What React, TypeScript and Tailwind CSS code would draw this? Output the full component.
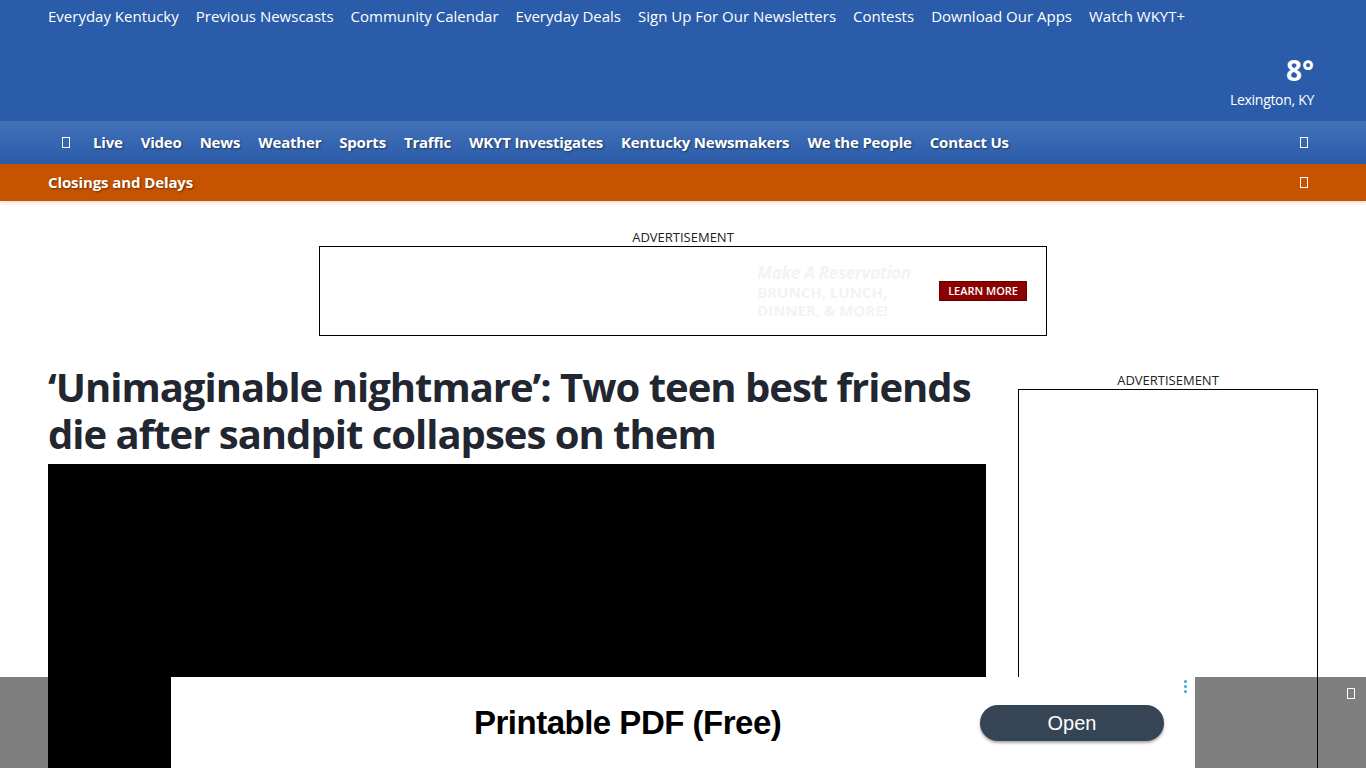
const topLinks = [
  "Everyday Kentucky",
  "Previous Newscasts",
  "Community Calendar",
  "Everyday Deals",
  "Sign Up For Our Newsletters",
  "Contests",
  "Download Our Apps",
  "Watch WKYT+",
];

const navLinks = [
  "Live",
  "Video",
  "News",
  "Weather",
  "Sports",
  "Traffic",
  "WKYT Investigates",
  "Kentucky Newsmakers",
  "We the People",
  "Contact Us",
];

const Tofu = ({ className = "" }: { className?: string }) => (
  <span className={`inline-block w-[8px] h-[11px] border border-white ${className}`} />
);

export default function App() {
  return (
    <div className="relative min-h-[768px] h-[768px] overflow-hidden bg-white font-['Open_Sans',sans-serif]">
      {/* Top header */}
      <header className="bg-[#2a5ca9] h-[121px] px-[48px] flex flex-col">
        <nav className="flex gap-[17px] pt-[5px] text-[15px] text-white">
          {topLinks.map((l) => (
            <a key={l} className="whitespace-nowrap">
              {l}
            </a>
          ))}
        </nav>
        <div className="ml-auto mt-[26px] mr-[4px] flex flex-col items-end text-white">
          <span className="text-[28px] font-bold leading-[32px]">8°</span>
          <span className="text-[14px] leading-[20px] mt-[4px] tracking-[-0.3px]">Lexington, KY</span>
        </div>
      </header>

      {/* Main nav */}
      <div className="h-[43px] bg-gradient-to-b from-[#4271b9] to-[#2b5ca9] flex items-center pl-[62px] pr-[58px] text-white">
        <Tofu className="mr-[23px]" />
        <nav className="flex gap-[18px] text-[15px] font-bold tracking-[-0.2px] [text-shadow:1px_1px_2px_rgba(0,0,0,0.45)]">
          {navLinks.map((l) => (
            <a key={l} className="whitespace-nowrap">
              {l}
            </a>
          ))}
        </nav>
        <Tofu className="ml-auto" />
      </div>

      {/* Alert bar */}
      <div className="h-[37px] bg-[#c65300] flex items-center pl-[48px] pr-[58px] text-white shadow-[0_2px_3px_rgba(200,120,40,0.25)]">
        <span className="text-[15px] font-bold tracking-[-0.1px] [text-shadow:1px_1px_2px_rgba(0,0,0,0.45)]">
          Closings and Delays
        </span>
        <Tofu className="ml-auto" />
      </div>

      {/* Leaderboard ad */}
      <div className="flex flex-col items-center pt-[28px]">
        <span className="text-[13px] leading-[17px] text-[#222]">ADVERTISEMENT</span>
        <div className="w-[728px] h-[90px] border border-black flex items-center justify-end pr-[19px]">
          <div className="flex flex-col text-[#f3f3f3] font-bold mr-[12px] w-[170px]">
            <span className="italic text-[17px] leading-[20px] tracking-[-0.3px]">Make A Reservation</span>
            <span className="text-[15px] leading-[18px]">BRUNCH, LUNCH,</span>
            <span className="text-[15px] leading-[18px]">DINNER, &amp; MORE!</span>
          </div>
          <span className="bg-[#8b0000] text-white text-[11px] font-semibold px-[8px] py-[1px] border border-[#600]">
            LEARN MORE
          </span>
        </div>
      </div>

      {/* Article */}
      <div className="flex px-[48px] pt-[28px] gap-[32px]">
        <main className="w-[938px] flex flex-col">
          <h1 className="text-[40px] font-bold leading-[47px] text-[#222631] tracking-[-1px] pb-[6px] mt-[-1px]">
            ‘Unimaginable nightmare’: Two teen best friends die after sandpit collapses on them
          </h1>
          <div className="bg-black h-[528px] mt-[1px]" />
        </main>
        <aside className="w-[300px] flex flex-col items-center">
          <span className="text-[13px] leading-[17px] text-[#222] mt-[8px]">ADVERTISEMENT</span>
          <div className="w-[300px] h-[600px] border border-black" />
        </aside>
      </div>

      {/* Sticky bottom ad */}
      <div className="absolute left-0 right-0 bottom-0 h-[91px] bg-black/50 flex justify-center">
        <div className="relative w-[1024px] h-[91px] bg-white flex items-center">
          <span className="ml-[303px] text-[33px] font-bold font-['Liberation_Sans',Arial,sans-serif] text-black tracking-[-0.5px]">
            Printable PDF (Free)
          </span>
          <span className="ml-auto mr-[31px] w-[184px] h-[36px] rounded-full bg-[#354555] text-white text-[20px] flex items-center justify-center font-['Liberation_Sans',Arial,sans-serif] shadow-[0_2px_3px_rgba(0,0,0,0.35)]">
            Open
          </span>
          <span className="absolute right-[8px] top-[3px] flex flex-col gap-[2px]">
            <span className="w-[3px] h-[3px] rounded-full bg-[#3aa8d0]" />
            <span className="w-[3px] h-[3px] rounded-full bg-[#3aa8d0]" />
            <span className="w-[3px] h-[3px] rounded-full bg-[#3aa8d0]" />
          </span>
        </div>
        <Tofu className="absolute right-[11px] top-[11px]" />
      </div>
    </div>
  );
}
